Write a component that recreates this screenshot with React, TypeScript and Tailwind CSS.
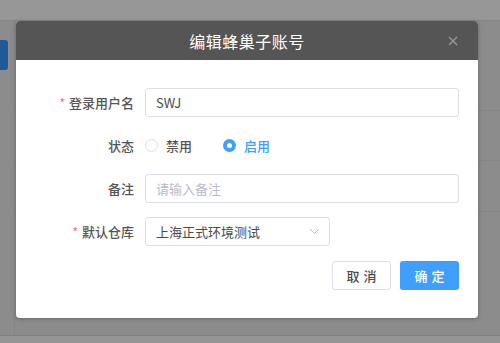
import React from "react";

const font = { fontFamily: '"Noto Sans CJK SC", "Noto Sans", sans-serif' };

function Label({ text, required }: { text: string; required?: boolean }) {
  return (
    <div className="w-[129px] shrink-0 flex justify-end items-center pr-[11px] text-[13px] font-medium text-[#555555]">
      {required && <span className="text-[#f56c6c] mr-[4px] text-[12px] font-normal">*</span>}
      <span>{text}</span>
    </div>
  );
}

export default function App() {
  return (
    <div className="relative w-[500px] h-[343px] overflow-hidden bg-[#8c8c8c]" style={font}>
      {/* background page (dimmed) */}
      <div className="flex flex-col h-full">
        <div className="h-[21px] bg-[#979797] border-b border-[#858585]" />
        <div className="flex flex-1">
          <div className="w-[15px] border-r border-[#858585] flex flex-col">
            <div className="mt-[19px] h-[30px] w-[8px] rounded-r-[3px] bg-[#1f5a96]" />
          </div>
          <div className="flex-1 flex flex-col">
            <div className="h-[90px] border-b border-[#858585]" />
            <div className="h-[50px] border-b border-[#858585]" />
            <div className="h-[51px] border-b border-[#858585]" />
            <div className="flex-1" />
          </div>
        </div>
        <div className="h-[8px] border-t border-[#7f7f7f] bg-[#959595]" />
      </div>

      {/* modal */}
      <div className="absolute left-[16px] top-[21px] w-[462px] h-[297px] rounded-[4px] overflow-hidden bg-white shadow-[0_1px_4px_rgba(0,0,0,0.25)] flex flex-col">
        <div className="h-[39px] bg-[#555555] flex items-center justify-center relative">
          <span className="text-white text-[16px] tracking-[0.5px]">编辑蜂巢子账号</span>
          <svg className="absolute right-[20px] top-[15px]" width="10" height="10" viewBox="0 0 10 10">
            <path d="M1 1L9 9M9 1L1 9" stroke="#9a9a9a" strokeWidth="1.2" />
          </svg>
        </div>
        <div className="flex flex-col pt-[28px] pr-[19px]">
          <div className="flex h-[29px]">
            <Label text="登录用户名" required />
            <div className="flex-1 border border-[#dcdfe6] rounded-[3px] flex items-center px-[10px] text-[13px] text-[#4a4a4a]">
              SWJ
            </div>
          </div>
          <div className="flex h-[29px] mt-[14px]">
            <Label text="状态" />
            <div className="flex items-center text-[13px] font-medium">
              <span className="w-[13px] h-[13px] rounded-full border border-[#dcdfe6] bg-white" />
              <span className="ml-[8px] text-[#555555]">禁用</span>
              <span className="ml-[31px] w-[13px] h-[13px] rounded-full bg-[#409eff] flex items-center justify-center">
                <span className="w-[5px] h-[5px] rounded-full bg-white" />
              </span>
              <span className="ml-[8px] text-[#409eff]">启用</span>
            </div>
          </div>
          <div className="flex h-[29px] mt-[14px]">
            <Label text="备注" />
            <div className="flex-1 border border-[#dcdfe6] rounded-[3px] flex items-center px-[10px] text-[13px] text-[#b8bcc4]">
              请输入备注
            </div>
          </div>
          <div className="flex h-[29px] mt-[14px]">
            <Label text="默认仓库" required />
            <div className="w-[185px] border border-[#dcdfe6] rounded-[3px] flex items-center justify-between pl-[10px] pr-[9px] text-[13px] text-[#4a4a4a]">
              <span>上海正式环境测试</span>
              <svg width="11" height="7" viewBox="0 0 11 7">
                <path d="M1 1L5.5 5.5L10 1" fill="none" stroke="#b8bcc4" strokeWidth="1" />
              </svg>
            </div>
          </div>
          <div className="flex justify-end gap-[9px] mt-[15px]">
            <button className="w-[59px] h-[29px] border border-[#dcdfe6] rounded-[3px] bg-white text-[13px] font-medium text-[#4a4a4a] tracking-[4px] pl-[4px]">
              取消
            </button>
            <button className="w-[59px] h-[29px] rounded-[3px] bg-[#409eff] text-[13px] font-medium text-white tracking-[4px] pl-[4px]">
              确定
            </button>
          </div>
        </div>
      </div>
    </div>
  );
}
